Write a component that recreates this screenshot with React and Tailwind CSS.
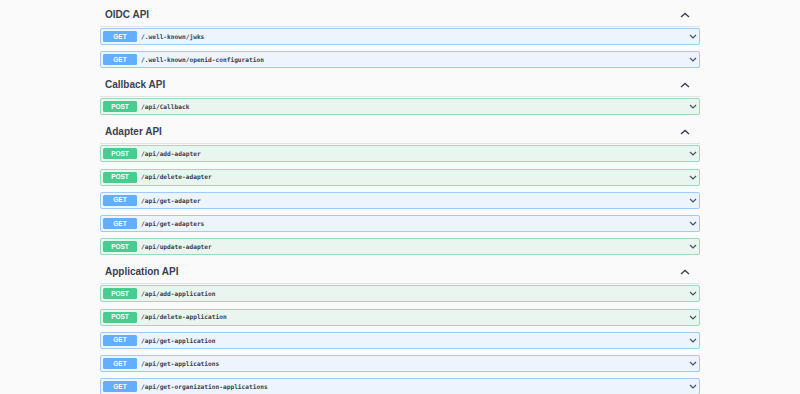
import React from "react";

const sections = [
  {
    title: "OIDC API",
    ops: [
      ["GET", "/.well-known/jwks"],
      ["GET", "/.well-known/openid-configuration"],
    ],
  },
  { title: "Callback API", ops: [["POST", "/api/Callback"]] },
  {
    title: "Adapter API",
    ops: [
      ["POST", "/api/add-adapter"],
      ["POST", "/api/delete-adapter"],
      ["GET", "/api/get-adapter"],
      ["GET", "/api/get-adapters"],
      ["POST", "/api/update-adapter"],
    ],
  },
  {
    title: "Application API",
    ops: [
      ["POST", "/api/add-application"],
      ["POST", "/api/delete-application"],
      ["GET", "/api/get-application"],
      ["GET", "/api/get-applications"],
      ["GET", "/api/get-organization-applications"],
    ],
  },
];

function ChevronDown() {
  return (
    <svg width="8" height="5" viewBox="0 0 8 5" className="shrink-0">
      <path d="M1 1l3 3 3-3" fill="none" stroke="#4b5060" strokeWidth="1.2" />
    </svg>
  );
}

function ChevronUp() {
  return (
    <svg width="10" height="6" viewBox="0 0 10 6" className="shrink-0">
      <path d="M1 5l4-3.6L9 5" fill="none" stroke="#3b4151" strokeWidth="1.4" />
    </svg>
  );
}

function Op({ method, path }) {
  const get = method === "GET";
  return (
    <div
      className={
        get
          ? "h-[17px] flex items-center pl-[2px] pr-[2px] rounded-[2px] border border-[#9ecbfa] bg-[#ecf4fd]"
          : "h-[17px] flex items-center pl-[2px] pr-[2px] rounded-[2px] border border-[#98dcbc] bg-[#e9f6ef]"
      }
    >
      <div
        className={
          get
            ? "w-[34px] h-[11px] rounded-[1.5px] bg-[#61affe] flex items-center justify-center text-white text-[6.5px] font-bold"
            : "w-[34px] h-[11px] rounded-[1.5px] bg-[#49cc90] flex items-center justify-center text-white text-[6.5px] font-bold"
        }
        style={{ fontFamily: '"Liberation Sans", Arial, sans-serif' }}
      >
        {method}
      </div>
      <div
        className="ml-[4px] flex-1 text-[6.2px] font-bold text-[#3b4151]"
        style={{ fontFamily: '"DejaVu Sans Mono", "Liberation Mono", monospace' }}
      >
        {path}
      </div>
      <ChevronDown />
    </div>
  );
}

export default function App() {
  return (
    <div
      className="min-h-screen bg-[#fafafa] pt-[4.5px]"
      style={{ fontFamily: '"Liberation Sans", Arial, sans-serif' }}
    >
      <div className="w-[600px] mx-auto flex flex-col gap-[6.5px]">
        {sections.map((s) => (
          <div key={s.title}>
            <div className="h-[22px] pt-[1px] pb-[1px] border-b border-[#e2e3e5] flex items-center pl-[5px] pr-[10px]">
              <div className="flex-1 text-[10px] font-bold text-[#3b4151] leading-none">
                {s.title}
              </div>
              <ChevronUp />
            </div>
            <div className="mt-[1.5px] flex flex-col gap-[6.25px]">
              {s.ops.map(([m, p]) => (
                <Op key={p} method={m} path={p} />
              ))}
            </div>
          </div>
        ))}
      </div>
    </div>
  );
}
